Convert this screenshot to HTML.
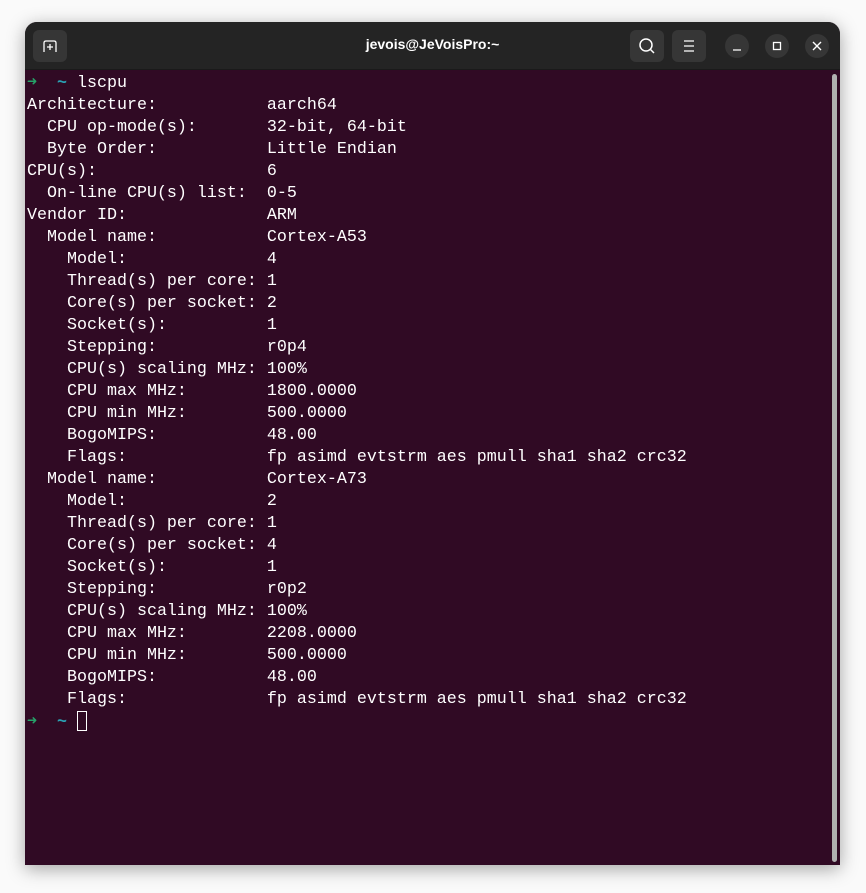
<!DOCTYPE html>
<html><head><style>
body{margin:0;width:866px;height:893px;background:#fafafa;overflow:hidden;position:relative}
.win{position:absolute;left:25px;top:22px;width:815px;height:843px;border-radius:12px 12px 0 0;overflow:hidden;background:#300a24;box-shadow:0 4px 18px rgba(0,0,0,.35)}
.tb{position:absolute;left:0;top:0;width:815px;height:47px;background:#242424;border-bottom:1px solid #1a1a1a}
.btn{position:absolute;top:8px;width:34px;height:32px;border-radius:6px;background:#363636}
.cb{position:absolute;top:12px;width:24px;height:24px;border-radius:12px;background:#363636}
.title{position:absolute;left:0;right:0;top:14px;text-align:center;color:#fff;font:bold 14px "Liberation Sans",sans-serif}
pre{position:absolute;left:2px;top:51px;margin:0;font:16.67px/22px "Liberation Mono",monospace;color:#fff}
.g{color:#26a269;font-weight:bold}.c{color:#2aa1b3;font-weight:bold}
.cur{display:inline-block;width:10px;height:20px;border:1px solid #fff;box-sizing:border-box;vertical-align:-5px}
.sb{position:absolute;left:807px;top:52px;width:5px;height:788px;border-radius:3px;background:#b0b0b0}
</style></head><body>
<div class="win">
<div class="tb">
<div class="btn" style="left:8px"><svg width="34" height="32"><path d="M11 22V13q0-2 2-2h8q2 0 2 2v9M14 17h6M17 14v6" stroke="#fff" stroke-width="1.3" fill="none"/></svg></div>
<div class="title">jevois@JeVoisPro:~</div>
<div class="btn" style="left:605px"><svg width="34" height="32"><circle cx="16" cy="15" r="6" stroke="#fff" stroke-width="1.5" fill="none"/><path d="M20 19l4 4" stroke="#fff" stroke-width="1.5"/></svg></div>
<div class="btn" style="left:647px"><svg width="34" height="32"><path d="M12 11h10M12 16h10M12 21h10" stroke="#fff" stroke-width="1.3"/></svg></div>
<div class="cb" style="left:700px"><svg width="24" height="24"><path d="M8 16h8" stroke="#fff" stroke-width="1.3"/></svg></div>
<div class="cb" style="left:740px"><svg width="24" height="24"><rect x="8.5" y="8.5" width="7" height="7" stroke="#fff" stroke-width="1.3" fill="none"/></svg></div>
<div class="cb" style="left:780px"><svg width="24" height="24"><path d="M8 8l8 8M16 8l-8 8" stroke="#fff" stroke-width="1.4"/></svg></div>
</div>
<pre><span class="g">➜</span>  <span class="c">~</span> lscpu
Architecture:           aarch64
  CPU op-mode(s):       32-bit, 64-bit
  Byte Order:           Little Endian
CPU(s):                 6
  On-line CPU(s) list:  0-5
Vendor ID:              ARM
  Model name:           Cortex-A53
    Model:              4
    Thread(s) per core: 1
    Core(s) per socket: 2
    Socket(s):          1
    Stepping:           r0p4
    CPU(s) scaling MHz: 100%
    CPU max MHz:        1800.0000
    CPU min MHz:        500.0000
    BogoMIPS:           48.00
    Flags:              fp asimd evtstrm aes pmull sha1 sha2 crc32
  Model name:           Cortex-A73
    Model:              2
    Thread(s) per core: 1
    Core(s) per socket: 4
    Socket(s):          1
    Stepping:           r0p2
    CPU(s) scaling MHz: 100%
    CPU max MHz:        2208.0000
    CPU min MHz:        500.0000
    BogoMIPS:           48.00
    Flags:              fp asimd evtstrm aes pmull sha1 sha2 crc32
<span class="g">➜</span>  <span class="c">~</span> <span class="cur"></span></pre>
<div class="sb"></div>
</div>
</body></html>
